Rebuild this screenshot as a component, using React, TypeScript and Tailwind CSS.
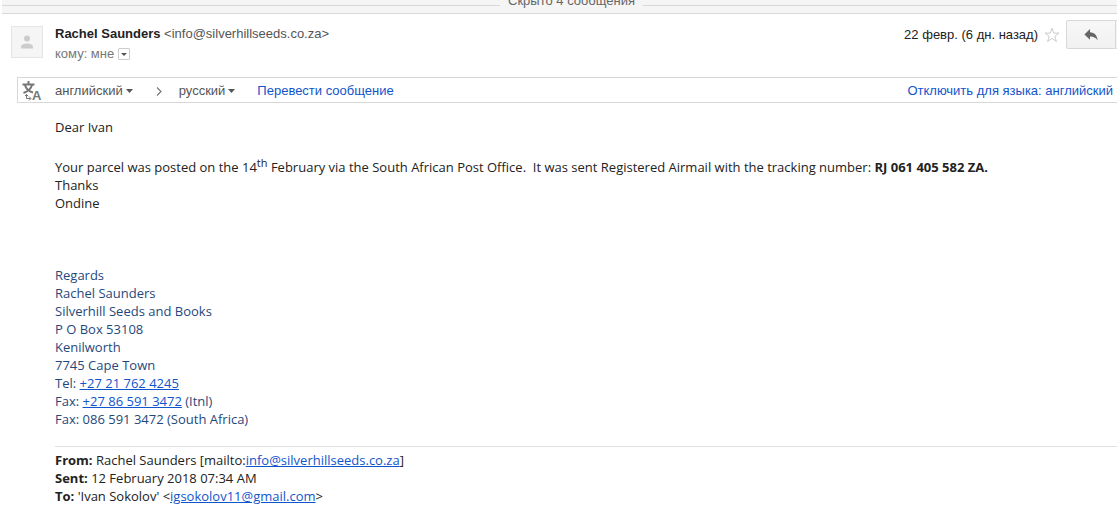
import type { ReactNode } from 'react';

const SIGNATURE = [
  'Regards',
  'Rachel Saunders',
  'Silverhill Seeds and Books',
  'P O Box 53108',
  'Kenilworth',
  '7745 Cape Town',
];

export default function App() {
  return (
    <main className="min-h-screen overflow-hidden bg-white font-['Liberation_Sans',Arial,sans-serif] text-[13px] text-[#222]">
      <CollapsedMessages />
      <MessageHeader />
      <TranslateBar />
      <MessageBody />
    </main>
  );
}

function CollapsedMessages() {
  return (
    <div className="ml-0.5 h-3.5 overflow-hidden border-b border-[#d8d8d8] bg-[#f5f5f5]">
      <div className="-mr-6 flex h-1.5 items-end">
        <div className="h-px flex-1 bg-[#d8d8d8]" />
        <button className="px-2 leading-[10px] text-[#666]">Скрыто 4 сообщения</button>
        <div className="h-px flex-1 bg-[#d8d8d8]" />
      </div>
    </div>
  );
}

function MessageHeader() {
  return (
    <header className="flex items-start pt-1.5 pl-[11px]">
      <div className="mt-1.5 flex size-8 items-center justify-center border border-[#e5e5e5] bg-[#f5f5f5]">
        <svg viewBox="0 0 12 14" className="h-3.5 w-3 fill-[#ccc]" aria-hidden="true">
          <circle cx="6" cy="3.5" r="3" />
          <path d="M0 13.5v-1.8C0 9.4 3.6 8.5 6 8.5s6 .9 6 3.2v1.8z" />
        </svg>
      </div>
      <div className="mt-1 ml-3 flex-1 leading-5">
        <div className="text-[#555]">
          <span className="font-bold text-[#222]">Rachel Saunders</span> &lt;info@silverhillseeds.co.za&gt;
        </div>
        <div className="flex items-center gap-1 text-[#777]">
          кому: мне
          <button
            aria-label="Показать детали"
            className="flex size-3 items-center justify-center rounded-[1px] border border-[#ccc]"
          >
            <Caret className="h-[3px] w-1.5" />
          </button>
        </div>
      </div>
      <div className="flex h-[29px] items-center">
        <span>22 февр. (6 дн. назад)</span>
        <button aria-label="Пометить" className="mx-1.5">
          <svg viewBox="0 0 16 16" className="size-4 fill-white stroke-[#ccc]" aria-hidden="true">
            <path d="M8 1.2l1.7 4.9h5.3l-4.2 3.2 1.6 5.2L8 11.4l-4.4 3.1 1.6-5.2L1 6.1h5.3z" />
          </svg>
        </button>
        <button
          aria-label="Ответить"
          className="flex h-full w-[50px] items-center justify-center rounded-l-[2px] border border-[#d8d8d8] bg-linear-to-b from-[#f7f7f7] to-[#f1f1f1]"
        >
          <svg viewBox="0 0 14 12" className="h-3 w-3.5 fill-[#666]" aria-hidden="true">
            <path d="M6 0v3.2c4.6.3 7 3 7.6 8C11.8 8.6 9.6 7.6 6 7.5v3.3L.4 5.4z" />
          </svg>
        </button>
        <div className="h-full w-px border-y border-[#d8d8d8] bg-[#f5f5f5]" />
      </div>
    </header>
  );
}

function TranslateBar() {
  return (
    <div className="mt-[13px] ml-[17px] flex h-[26px] items-center border border-r-0 border-[#d8d8d8] pt-0.5 pr-1 pl-1">
      <TranslateIcon />
      <button className="ml-3 flex items-center gap-[3px] text-[#555]">
        английский
        <Caret className="h-1 w-[7px]" />
      </button>
      <svg viewBox="0 0 6 9" className="mr-[17px] ml-[23px] h-[9px] w-1.5 fill-none stroke-[#777]" aria-hidden="true">
        <path d="M1 .5l4 4-4 4" strokeWidth="1.2" />
      </svg>
      <button className="flex items-center gap-[3px] text-[#555]">
        русский
        <Caret className="h-1 w-[7px]" />
      </button>
      <a href="#translate" className="ml-[22px] text-[#15c]">
        Перевести сообщение
      </a>
      <a href="#disable" className="ml-auto text-[#15c]">
        Отключить для языка: английский
      </a>
    </div>
  );
}

function MessageBody() {
  return (
    <article className="ml-[55px] pt-[15px] font-['Open_Sans',sans-serif] text-[13px] leading-[18px]">
      <p>Dear Ivan</p>
      <p className="pt-[22px]">
        Your parcel was posted on the 14<sup className="text-[11px] leading-none">th</sup> February via the South
        African Post Office.&nbsp; It was sent Registered Airmail with the tracking number: <b>RJ 061 405 582 ZA.</b>
      </p>
      <p>Thanks</p>
      <p>Ondine</p>
      <div className="pt-[54px] text-[#1f497d]">
        {SIGNATURE.map((line) => (
          <p key={line}>{line}</p>
        ))}
        <p>
          Tel: <BodyLink href="tel:+27217624245">+27 21 762 4245</BodyLink>
        </p>
        <p>
          Fax: <BodyLink href="tel:+27865913472">+27 86 591 3472</BodyLink> (Itnl)
        </p>
        <p>Fax: 086 591 3472 (South Africa)</p>
      </div>
      <div className="mt-[18px] border-t border-[#e1e1e1] pt-1">
        <p>
          <b>From:</b> Rachel Saunders [mailto:
          <BodyLink href="mailto:info@silverhillseeds.co.za">info@silverhillseeds.co.za</BodyLink>]
        </p>
        <p>
          <b>Sent:</b> 12 February 2018 07:34 AM
        </p>
        <p>
          <b>To:</b> 'Ivan Sokolov' &lt;
          <BodyLink href="mailto:igsokolov11@gmail.com">igsokolov11@gmail.com</BodyLink>&gt;
        </p>
      </div>
    </article>
  );
}

function BodyLink({ href, children }: { href: string; children: ReactNode }) {
  return (
    <a href={href} className="text-[#15c] underline">
      {children}
    </a>
  );
}

function Caret({ className }: { className: string }) {
  return (
    <svg viewBox="0 0 8 4" preserveAspectRatio="none" className={`fill-[#555] ${className}`} aria-hidden="true">
      <path d="M0 0h8L4 4z" />
    </svg>
  );
}

function TranslateIcon() {
  return (
    <svg viewBox="0 0 21 22" className="h-[22px] w-[21px] fill-none stroke-[#777]" aria-hidden="true">
      <path d="M6.500 1v3M.5 4.500h12M3 5c1 4 4.500 6.500 8 7.500M10 5c-1 4-4.500 6.500-8.500 8" strokeWidth="2" />
      <path d="M4.500 14.500v4h4M7 16.500l2 2-2 2M3 16l1.500-1.500L6 16" />
      <text x="10" y="20" className="fill-[#777] stroke-none text-[13px] font-bold">
        A
      </text>
    </svg>
  );
}
